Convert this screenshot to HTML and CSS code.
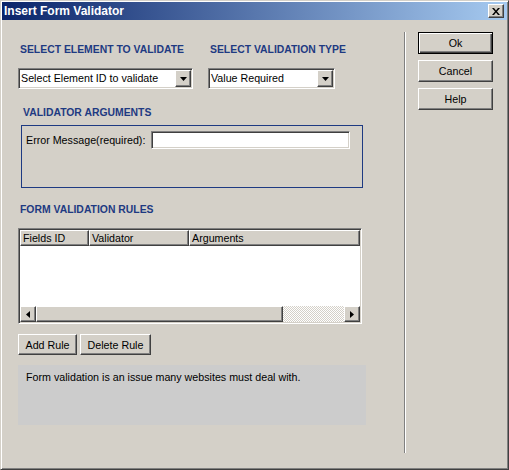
FILE: index.html
```html
<!DOCTYPE html>
<html>
<head>
<meta charset="utf-8">
<title>Insert Form Validator</title>
<link rel="stylesheet" href="styles.css">
</head>
<body>
<div class="window">
  <div class="titlebar">
    <span class="title">Insert Form Validator</span>
    <div class="close-btn raised">
      <svg width="8" height="7" viewBox="0 0 8 7"><path d="M0 0H2L4 2.4L6 0H8L5 3.5L8 7H6L4 4.6L2 7H0L3 3.5Z" fill="#000"/></svg>
    </div>
  </div>
  <div class="main">
    <div class="left">
      <div class="row-top">
        <div class="col col-element">
          <div class="heading">SELECT ELEMENT TO VALIDATE</div>
          <div class="combo combo-element sunken">
            <span class="combo-text">Select Element ID to validate</span>
            <span class="combo-btn raised"><svg width="7" height="4" viewBox="0 0 7 4"><path d="M0 0H7L3.5 4Z" fill="#000"/></svg></span>
          </div>
        </div>
        <div class="col col-type">
          <div class="heading">SELECT VALIDATION TYPE</div>
          <div class="combo combo-type sunken">
            <span class="combo-text">Value Required</span>
            <span class="combo-btn raised"><svg width="7" height="4" viewBox="0 0 7 4"><path d="M0 0H7L3.5 4Z" fill="#000"/></svg></span>
          </div>
        </div>
      </div>
      <div class="heading heading-args">VALIDATOR ARGUMENTS</div>
      <div class="args-box">
        <span class="args-label">Error Message(required):</span>
        <div class="textbox sunken"></div>
      </div>
      <div class="heading heading-rules">FORM VALIDATION RULES</div>
      <div class="listview sunken">
        <div class="lv-header">
          <div class="lv-col c1 raised">Fields ID</div>
          <div class="lv-col c2 raised">Validator</div>
          <div class="lv-col c3 raised">Arguments</div>
        </div>
        <div class="lv-body"></div>
        <div class="hscroll">
          <div class="sb-btn raised"><svg width="4" height="7" viewBox="0 0 4 7"><path d="M4 0V7L0 3.5Z" fill="#000"/></svg></div>
          <div class="sb-thumb raised"></div>
          <div class="sb-track"></div>
          <div class="sb-btn raised"><svg width="4" height="7" viewBox="0 0 4 7"><path d="M0 0V7L4 3.5Z" fill="#000"/></svg></div>
        </div>
      </div>
      <div class="rule-buttons">
        <button class="btn raised btn-add">Add Rule</button>
        <button class="btn raised btn-del">Delete Rule</button>
      </div>
      <div class="info">Form validation is an issue many websites must deal with.</div>
    </div>
    <div class="separator"></div>
    <div class="right">
      <button class="btn btn-dlg btn-default">Ok</button>
      <button class="btn btn-dlg raised">Cancel</button>
      <button class="btn btn-dlg raised">Help</button>
    </div>
  </div>
</div>
</body>
</html>
```
FILE: styles.css
```css
* { box-sizing: border-box; }
html, body { margin: 0; padding: 0; }
body {
  width: 509px;
  height: 470px;
  overflow: hidden;
  background: #d4d0c8;
  font-family: "Liberation Sans", Arial, sans-serif;
  font-size: 10.7px;
  color: #000;
}
.window {
  width: 509px;
  height: 470px;
  padding: 1px;
  border: 1px solid;
  border-color: #d4d0c8 #404040 #404040 #d4d0c8;
  box-shadow: inset 1px 1px #fff, inset -1px -1px #808080;
  background: #d4d0c8;
  display: flex;
  flex-direction: column;
}
.raised {
  border: 1px solid;
  border-color: #fff #404040 #404040 #fff;
  box-shadow: inset -1px -1px #808080;
  background: #d4d0c8;
}
.sunken {
  border: 1px solid;
  border-color: #808080 #fff #fff #808080;
  box-shadow: inset 1px 1px #404040, inset -1px -1px #d4d0c8;
  padding: 1px;
  background: #fff;
}
.titlebar {
  height: 18px;
  flex: none;
  display: flex;
  align-items: flex-start;
  background: linear-gradient(to right, #0a246a, #a6caf0);
}
.title {
  color: #fff;
  font-weight: bold;
  font-size: 12px;
  line-height: 18px;
  padding-left: 2px;
  white-space: nowrap;
}
.close-btn {
  width: 16px;
  height: 14px;
  margin: 2px 3px 0 auto;
  display: flex;
  align-items: center;
  justify-content: center;
}
.main {
  flex: 1;
  display: flex;
}
.left {
  width: 402px;
  flex: none;
  padding: 24px 0 0 16px;
  display: flex;
  flex-direction: column;
  align-items: flex-start;
}
.row-top {
  display: flex;
  gap: 15px;
}
.col {
  display: flex;
  flex-direction: column;
}
.heading {
  font-weight: bold;
  font-size: 10.4px;
  line-height: 12px;
  height: 12px;
  color: #1e3a82;
  padding-left: 2px;
  margin-bottom: 12px;
  white-space: nowrap;
}
.combo {
  height: 21px;
  display: flex;
}
.combo-element { width: 175px; }
.combo-type { width: 127px; }
.combo-text {
  flex: 1;
  line-height: 17px;
  padding-left: 1px;
  white-space: nowrap;
  overflow: hidden;
}
.combo-btn {
  width: 16px;
  height: 17px;
  flex: none;
  display: flex;
  align-items: center;
  justify-content: center;
}
.heading-args {
  margin-top: 18px;
  margin-bottom: 6px;
  padding-left: 5px;
}
.args-box {
  margin-left: 3px;
  width: 342px;
  height: 63px;
  border: 1px solid #1e3a82;
  padding: 5px 0 0 4px;
  display: grid;
  grid-template-columns: 125px 199px;
  align-items: center;
  align-content: start;
}
.args-label { white-space: nowrap; }
.textbox { height: 18px; }
.heading-rules {
  margin-top: 16px;
  margin-bottom: 12px;
}
.listview {
  width: 344px;
  height: 96px;
  display: flex;
  flex-direction: column;
}
.lv-header {
  display: flex;
  height: 16px;
  flex: none;
}
.lv-col {
  line-height: 14px;
  padding-left: 2px;
  white-space: nowrap;
  overflow: hidden;
}
.c1 { width: 69px; }
.c2 { width: 100px; }
.c3 { flex: 1; }
.lv-body {
  flex: 1;
  background: #fff;
}
.hscroll {
  height: 16px;
  flex: none;
  display: flex;
}
.sb-btn {
  width: 16px;
  height: 16px;
  display: flex;
  align-items: center;
  justify-content: center;
}
.sb-thumb { width: 247px; height: 16px; }
.sb-track {
  flex: 1;
  background: repeating-conic-gradient(#d4d0c8 0 25%, #fff 0 50%) 0 0 / 2px 2px;
}
.btn {
  font-family: inherit;
  font-size: 10.7px;
  color: #000;
  margin: 0;
  padding: 0;
  text-align: center;
  cursor: default;
}
.rule-buttons {
  margin-top: 10px;
  display: flex;
  gap: 3px;
}
.btn-add { width: 59px; height: 21px; }
.btn-del { width: 71px; height: 21px; }
.info {
  margin-top: 10px;
  width: 348px;
  height: 60px;
  background: #cccccc;
  padding: 6px 8px;
  line-height: 13px;
}
.separator {
  margin-top: 12px;
  height: 421px;
  width: 2px;
  flex: none;
  border-left: 1px solid #808080;
  border-right: 1px solid #fff;
}
.right {
  padding: 12px 0 0 12px;
  display: flex;
  flex-direction: column;
  gap: 6px;
}
.btn-dlg { width: 75px; height: 22px; }
.btn-default {
  border: 1px solid #000;
  background: #d4d0c8;
  box-shadow: inset 1px 1px #fff, inset -1px -1px #404040, inset -2px -2px #808080;
}
```
